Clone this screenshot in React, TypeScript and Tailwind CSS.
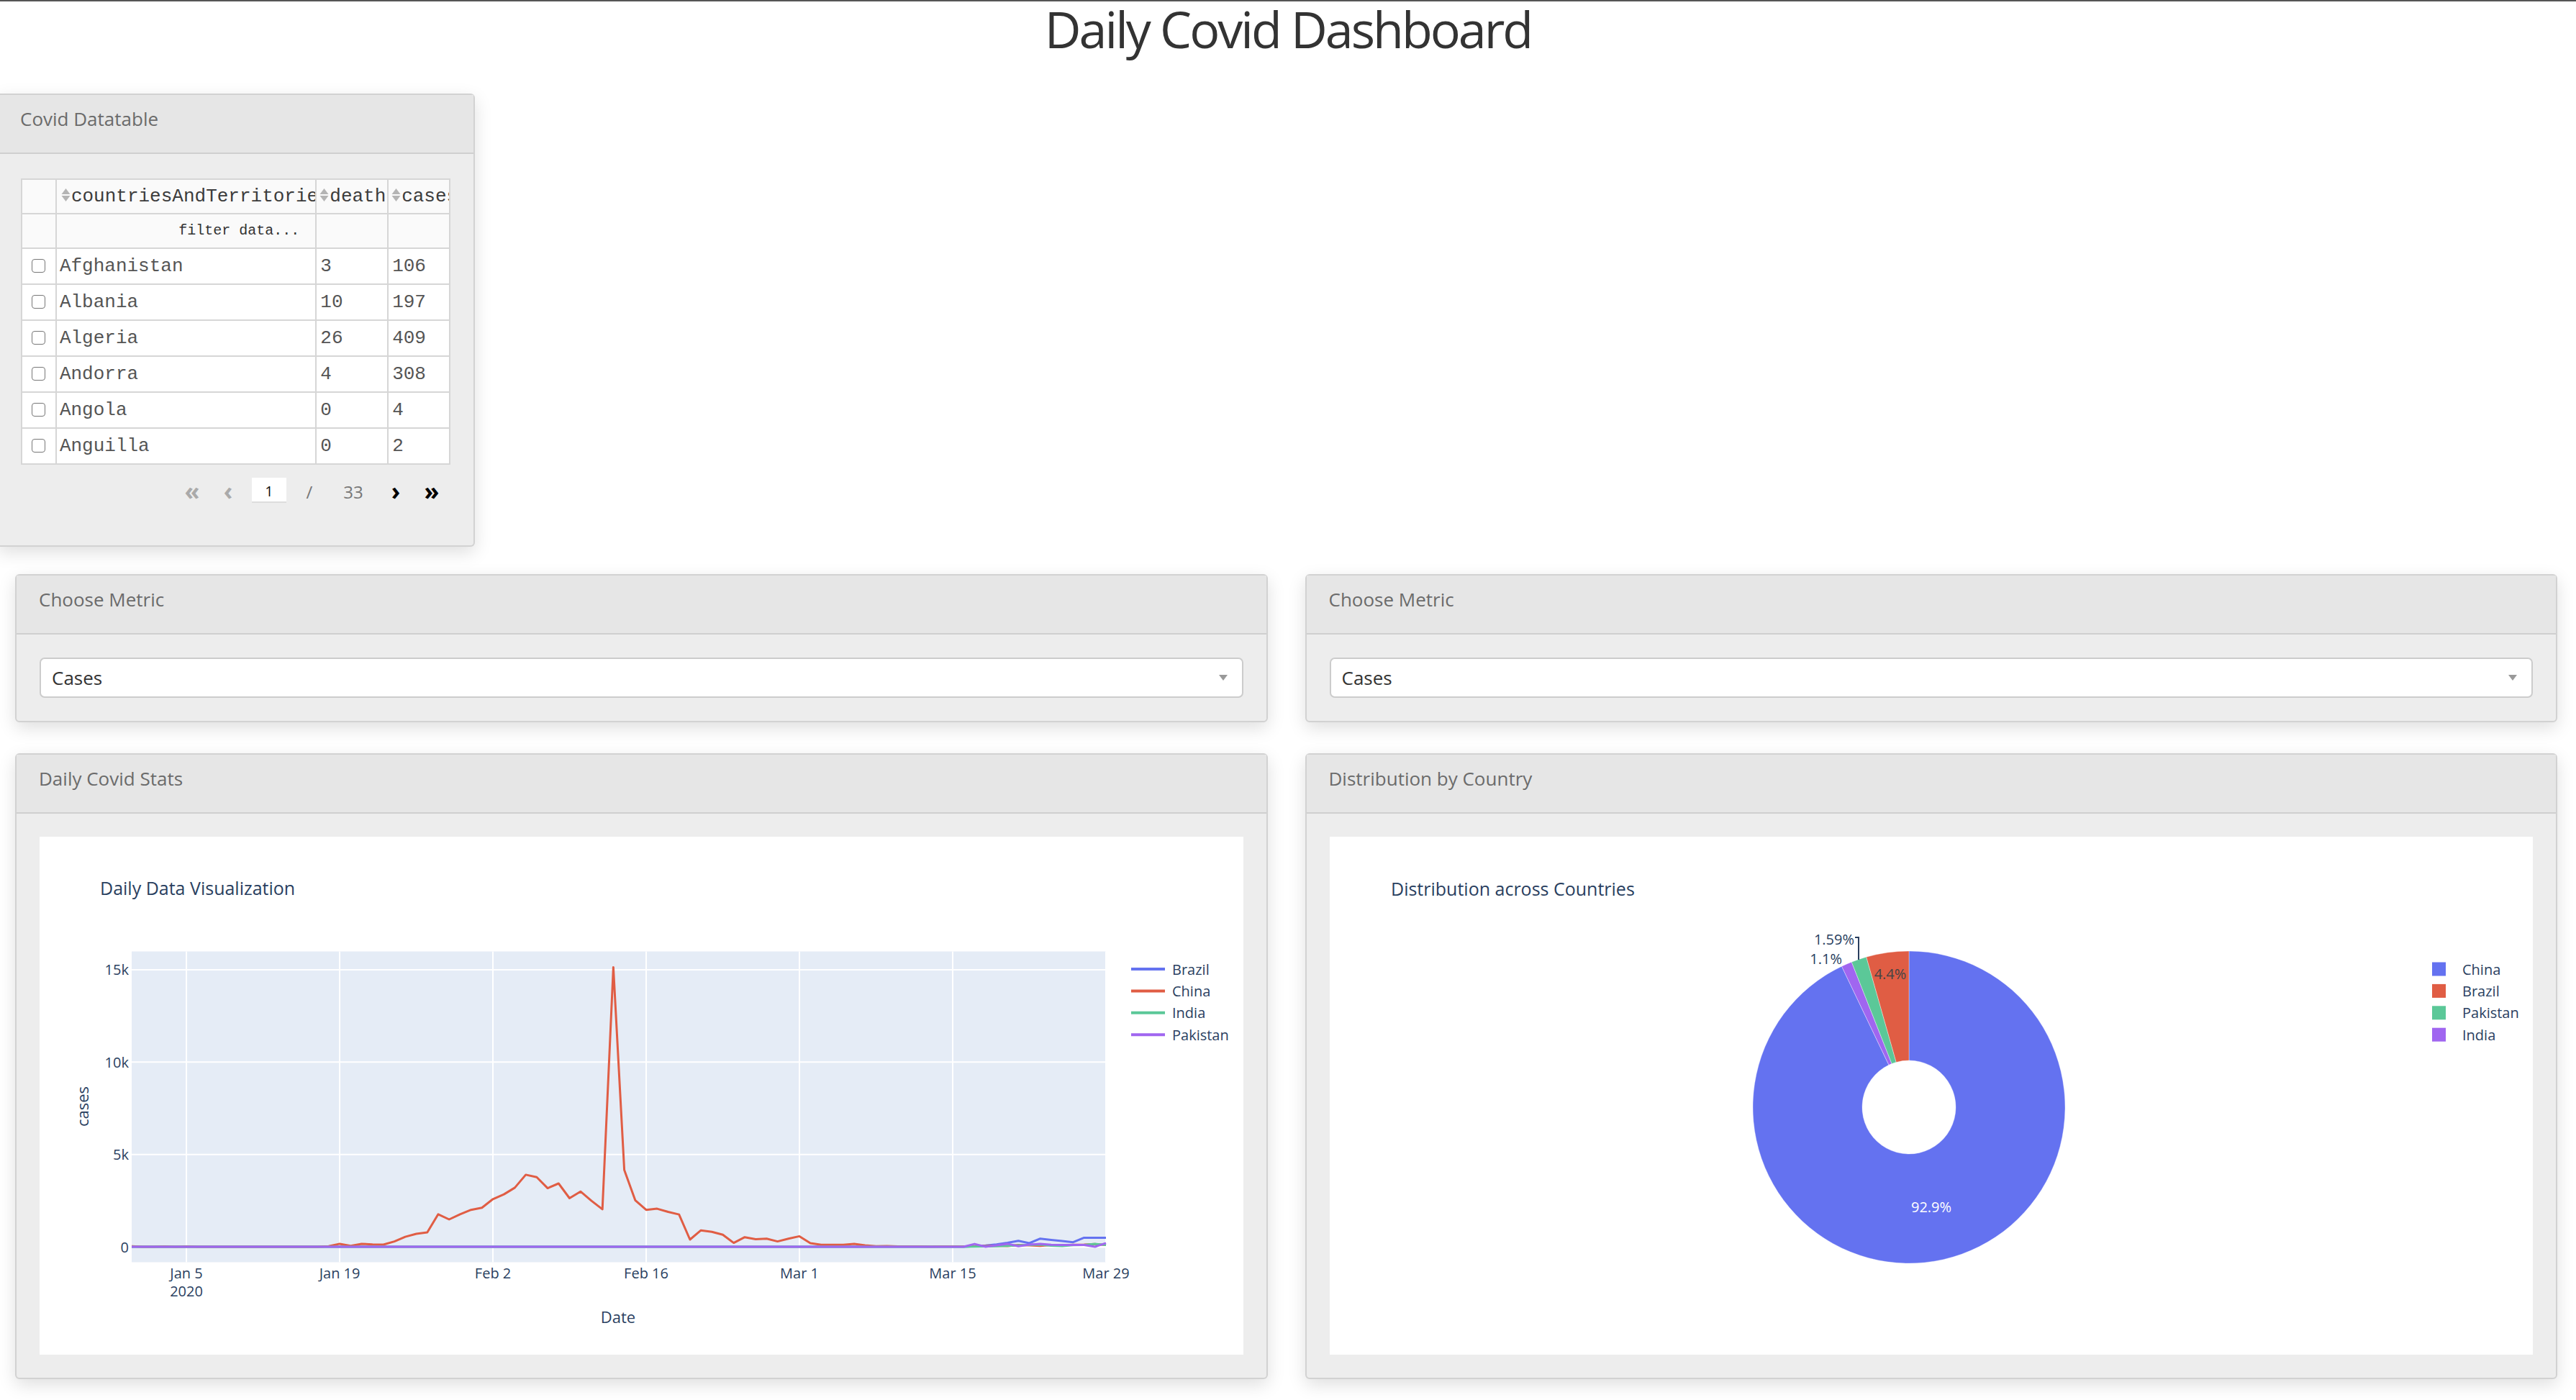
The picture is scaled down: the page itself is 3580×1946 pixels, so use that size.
import React from "react";

const BLUE = "#6472f0";
const RED = "#e05d44";
const GREEN = "#5bc898";
const PURPLE = "#a066f0";
const INK = "#2a3f5f";

// china daily cases, Dec 31 -> Mar 29 (90 days)
const china = [
  27, 0, 0, 17, 0, 15, 0, 0, 0, 0, 0, 0, 0, 0, 0, 0, 0, 4, 30, 160, 50, 160, 130, 115, 290, 540, 700, 780, 1760, 1480,
  1760, 2000, 2110, 2580, 2840, 3200, 3900, 3770, 3170, 3430, 2630, 2990, 2490, 2030, 15140, 4160, 2520, 2000, 2060,
  1890, 1750, 390, 890, 810, 650, 210, 520, 410, 440, 290, 440, 570, 190, 110, 110, 110, 160, 80, 30, 40, 20, 25, 15,
  10, 15, 20, 16, 21, 39, 58, 44, 99, 82, 46, 102, 78, 111, 115, 145, 99,
];

function series(tail: number[]) {
  const out: number[] = [];
  for (let i = 0; i < 90 - tail.length; i++) out.push(0);
  return out.concat(tail);
}

const brazil = series([0, 30, 70, 130, 220, 325, 195, 440, 375, 310, 245, 490, 490, 490]);
const india = series([0, 10, 20, 30, 50, 80, 100, 120, 60, 40, 90, 100, 150, 100]);
const pakistan = series([0, 150, 0, 80, 160, 30, 120, 150, 110, 100, 100, 100, 0, 200]);

const rows = [
  ["Afghanistan", "3", "106"],
  ["Albania", "10", "197"],
  ["Algeria", "26", "409"],
  ["Andorra", "4", "308"],
  ["Angola", "0", "4"],
  ["Anguilla", "0", "2"],
];

function SortIcon() {
  return (
    <svg width="13" height="20" viewBox="0 0 13 20" className="-mt-[4px] mr-[1px] inline-block align-middle">
      <path d="M6.5 1 L12.5 9 H0.5 Z" fill="#b4b4b4" />
      <path d="M6.5 19 L12.5 11 H0.5 Z" fill="#b4b4b4" />
    </svg>
  );
}

function Card({ title, className, children }: { title: string; className?: string; children: React.ReactNode }) {
  return (
    <div
      className={`rounded-[6px] border-2 border-[#d2d2d2] bg-[#ededed] shadow-[0_8px_24px_rgba(0,0,0,0.13)] ${className ?? ""}`}
    >
      <div className="flex h-[82px] items-center border-b-2 border-[#cfcfcf] bg-[#e6e6e6] px-[31px] pb-[13px] text-[26px] text-[#6b6b6b]">
        {title}
      </div>
      <div className="p-[32px]">{children}</div>
    </div>
  );
}

function Select() {
  return (
    <div className="flex h-[56px] items-center justify-between rounded-[7px] border-2 border-[#cccccc] bg-white pl-[15px] pr-[20px] text-[26px] text-[#333]">
      <span>Cases</span>
      <svg width="12" height="8" viewBox="0 0 12 8">
        <path d="M0 0 H12 L6 8 Z" fill="#999" />
      </svg>
    </div>
  );
}

function LineChart() {
  const px0 = 128;
  const pw = 1354;
  const py0 = 159.5;
  const ph = 432;
  const xd = (d: number) => px0 + (d * pw) / 89;
  const yv = (v: number) => 570 - v * 0.02567;
  const path = (data: number[]) => data.map((v, i) => `${i ? "L" : "M"}${xd(i).toFixed(1)} ${yv(v).toFixed(1)}`).join(" ");
  const xt = [
    [5, "Jan 5"],
    [19, "Jan 19"],
    [33, "Feb 2"],
    [47, "Feb 16"],
    [61, "Mar 1"],
    [75, "Mar 15"],
    [89, "Mar 29"],
  ] as const;
  const yt = [
    [0, "0"],
    [5000, "5k"],
    [10000, "10k"],
    [15000, "15k"],
  ] as const;
  const legend = [
    ["Brazil", BLUE],
    ["China", RED],
    ["India", GREEN],
    ["Pakistan", PURPLE],
  ];
  return (
    <svg width="1675" height="720" className="block font-['Open_Sans',sans-serif]">
      <text x="84" y="71" dominantBaseline="central" fontSize="25" fill={INK}>
        Daily Data Visualization
      </text>
      <rect x={px0} y={py0} width={pw} height={ph} fill="#e5ecf6" />
      {xt.map(([d]) => (
        <line key={d} x1={xd(d)} x2={xd(d)} y1={py0} y2={py0 + ph} stroke="#fff" strokeWidth="2" />
      ))}
      {yt.map(([v]) => (
        <line key={v} x1={px0} x2={px0 + pw} y1={yv(v)} y2={yv(v)} stroke="#fff" strokeWidth={v === 0 ? 3 : 2} />
      ))}
      <path d={path(brazil)} fill="none" stroke={BLUE} strokeWidth="3" strokeLinejoin="round" />
      <path d={path(china)} fill="none" stroke={RED} strokeWidth="3" strokeLinejoin="round" />
      <path d={path(india)} fill="none" stroke={GREEN} strokeWidth="3" strokeLinejoin="round" />
      <path d={path(pakistan)} fill="none" stroke={PURPLE} strokeWidth="3" strokeLinejoin="round" />
      {yt.map(([v, t]) => (
        <text key={t} x="124" y={yv(v)} textAnchor="end" dominantBaseline="central" fontSize="20" fill={INK}>
          {t}
        </text>
      ))}
      {xt.map(([d, t]) => (
        <text key={t} x={xd(d)} y="606" textAnchor="middle" dominantBaseline="central" fontSize="20" fill={INK}>
          {t}
        </text>
      ))}
      <text x={xd(5)} y="631" textAnchor="middle" dominantBaseline="central" fontSize="20" fill={INK}>
        2020
      </text>
      <text x="804" y="667" textAnchor="middle" dominantBaseline="central" fontSize="22" fill={INK}>
        Date
      </text>
      <text
        x="59"
        y="375"
        textAnchor="middle"
        dominantBaseline="central"
        fontSize="22"
        fill={INK}
        transform="rotate(-90 59 375)"
      >
        cases
      </text>
      {legend.map(([name, c], i) => {
        const y = 184 + i * 30.4;
        return (
          <g key={name}>
            <line x1="1517" x2="1564" y1={y} y2={y} stroke={c} strokeWidth="4" />
            <text x="1574" y={y} dominantBaseline="central" fontSize="20" fill={INK}>
              {name}
            </text>
          </g>
        );
      })}
    </svg>
  );
}

function PieChart() {
  const cx = 805;
  const cy = 376;
  const r = 217;
  const ri = 65;
  const pt = (a: number, rad: number) => {
    const t = (a * Math.PI) / 180;
    return `${(cx + rad * Math.sin(t)).toFixed(2)} ${(cy - rad * Math.cos(t)).toFixed(2)}`;
  };
  const slice = (a0: number, a1: number) => {
    const large = a1 - a0 > 180 ? 1 : 0;
    return `M${pt(a0, r)} A${r} ${r} 0 ${large} 1 ${pt(a1, r)} L${pt(a1, ri)} A${ri} ${ri} 0 ${large} 0 ${pt(a0, ri)} Z`;
  };
  const slices = [
    [0, 334.48, BLUE],
    [334.48, 338.44, PURPLE],
    [338.44, 344.16, GREEN],
    [344.16, 360, RED],
  ] as const;
  const legend = [
    ["China", BLUE],
    ["Brazil", RED],
    ["Pakistan", GREEN],
    ["India", PURPLE],
  ];
  return (
    <svg width="1677" height="720" className="block font-['Open_Sans',sans-serif]">
      <text x="85" y="72" dominantBaseline="central" fontSize="25" fill={INK}>
        Distribution across Countries
      </text>
      {slices.map(([a0, a1, c]) => (
        <path key={a0} d={slice(a0, a1)} fill={c} stroke="#ffffff" strokeOpacity="0.35" strokeWidth="1" />
      ))}
      <text x="779" y="190" textAnchor="middle" dominantBaseline="central" fontSize="20" fill="#444">
        4.4%
      </text>
      <text x="836" y="514" textAnchor="middle" dominantBaseline="central" fontSize="20" fill="#fff">
        92.9%
      </text>
      <text x="729" y="142" textAnchor="end" dominantBaseline="central" fontSize="20" fill={INK}>
        1.59%
      </text>
      <text x="712" y="169" textAnchor="end" dominantBaseline="central" fontSize="20" fill={INK}>
        1.1%
      </text>
      <polyline points="730,140 735,140 735,171" fill="none" stroke={INK} strokeWidth="2" />
      {legend.map(([name, c], i) => {
        const y = 184 + i * 30.4;
        return (
          <g key={name}>
            <rect x="1532" y={y - 9.5} width="19" height="19" fill={c} />
            <text x="1574" y={y} dominantBaseline="central" fontSize="20" fill={INK}>
              {name}
            </text>
          </g>
        );
      })}
    </svg>
  );
}

function DataTable() {
  const cell = "border-2 border-[#d6d6d6] overflow-hidden whitespace-nowrap max-w-0";
  return (
    <div className="pt-[2px]">
      <table className="table-fixed border-collapse font-['Liberation_Mono',monospace] text-[26px] text-[#555]">
        <colgroup>
          <col className="w-[48px]" />
          <col className="w-[362px]" />
          <col className="w-[100px]" />
          <col className="w-[86px]" />
        </colgroup>
        <thead>
          <tr className="h-[48px] bg-[#fafafa] text-[#3c3c3c]">
            <th className={cell}></th>
            <th className={`${cell} pl-[6px] text-left font-normal`}>
              <SortIcon />
              countriesAndTerritories
            </th>
            <th className={`${cell} pl-[4px] text-left font-normal`}>
              <SortIcon />
              deaths
            </th>
            <th className={`${cell} pl-[4px] text-left font-normal`}>
              <SortIcon />
              cases
            </th>
          </tr>
          <tr className="h-[48px] bg-[#fafafa]">
            <th className={cell}></th>
            <th className={`${cell} pr-[22px] text-right text-[20px] font-normal text-[#333]`}>filter data...</th>
            <th className={cell}></th>
            <th className={cell}></th>
          </tr>
        </thead>
        <tbody className="bg-white">
          {rows.map((r) => (
            <tr key={r[0]} className="h-[50px]">
              <td className={`${cell} text-center`}>
                <span className="inline-block h-[19px] w-[19px] translate-y-[2px] rounded-[4px] border-[1.5px] border-[#777] bg-white" />
              </td>
              <td className={`${cell} pl-[4px]`}>{r[0]}</td>
              <td className={`${cell} pl-[5px]`}>{r[1]}</td>
              <td className={`${cell} pl-[5px]`}>{r[2]}</td>
            </tr>
          ))}
        </tbody>
      </table>
      <div className="mb-[27px] mt-[18px] flex h-[35px] w-[596px] items-center justify-end text-[24px]">
        <span className="w-[50px] text-center text-[34px] font-bold leading-none text-[#aaa]">«</span>
        <span className="w-[50px] text-center text-[34px] font-bold leading-none text-[#aaa]">‹</span>
        <span className="ml-[8px] flex h-[35px] w-[48px] items-center justify-center border-b-2 border-[#ddd] bg-white pt-[4px] text-[20px] text-[#111]">
          1
        </span>
        <span className="w-[64px] pt-[4px] text-center text-[#777]">/</span>
        <span className="w-[58px] pt-[4px] text-center text-[#777]">33</span>
        <span className="ml-[5px] w-[50px] text-center text-[34px] font-bold leading-none text-black">›</span>
        <span className="w-[50px] text-center text-[34px] font-bold leading-none text-black">»</span>
      </div>
    </div>
  );
}

export default function App() {
  return (
    <div className="min-h-screen border-t-2 border-[#555] bg-white pb-[30px] font-['Open_Sans',sans-serif]">
      <h1 className="-mt-[10px] text-center text-[70px] font-normal leading-[96px] tracking-[-3px] text-[#333]">
        Daily Covid Dashboard
      </h1>

      <Card title="Covid Datatable" className="-ml-[3px] mt-[42px] w-[663px] rounded-l-none border-l-0">
        <DataTable />
      </Card>

      <div className="mt-[38px] grid grid-cols-2 gap-[52px] pl-[21px] pr-[26px]">
        <Card title="Choose Metric">
          <Select />
        </Card>
        <Card title="Choose Metric">
          <Select />
        </Card>
      </div>

      <div className="mt-[43px] grid grid-cols-2 gap-[52px] pl-[21px] pr-[26px]">
        <Card title="Daily Covid Stats">
          <div className="h-[720px] overflow-hidden bg-white">
            <LineChart />
          </div>
        </Card>
        <Card title="Distribution by Country">
          <div className="h-[720px] overflow-hidden bg-white">
            <PieChart />
          </div>
        </Card>
      </div>
    </div>
  );
}
